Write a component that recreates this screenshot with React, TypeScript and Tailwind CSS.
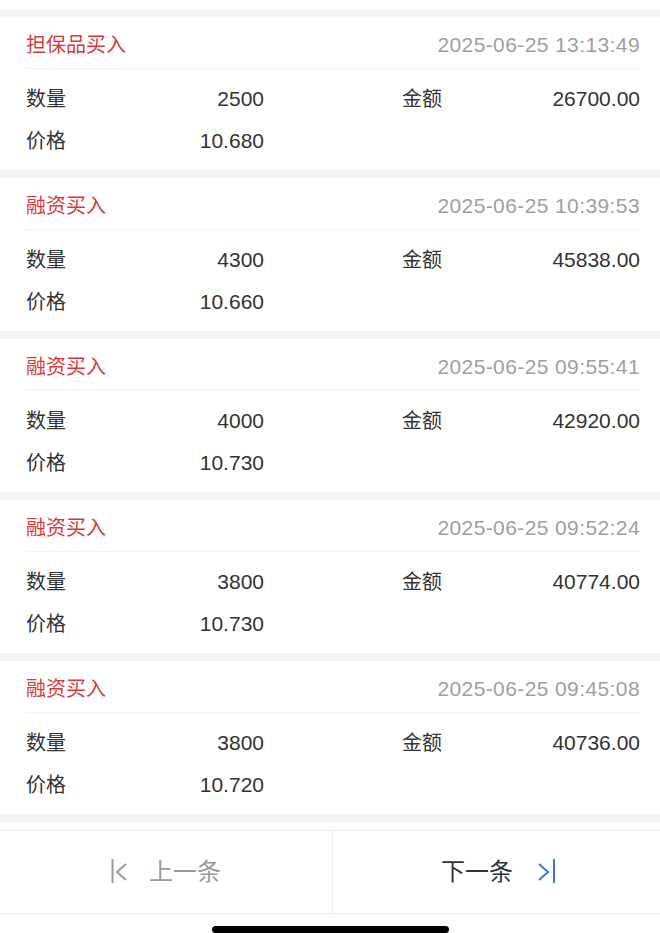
import React from "react";

type Rec = { type: string; time: string; qty: string; amount: string; price: string };

const records: Rec[] = [
  { type: "担保品买入", time: "2025-06-25 13:13:49", qty: "2500", amount: "26700.00", price: "10.680" },
  { type: "融资买入", time: "2025-06-25 10:39:53", qty: "4300", amount: "45838.00", price: "10.660" },
  { type: "融资买入", time: "2025-06-25 09:55:41", qty: "4000", amount: "42920.00", price: "10.730" },
  { type: "融资买入", time: "2025-06-25 09:52:24", qty: "3800", amount: "40774.00", price: "10.730" },
  { type: "融资买入", time: "2025-06-25 09:45:08", qty: "3800", amount: "40736.00", price: "10.720" },
];

const font = { fontFamily: '"Liberation Sans", "Noto Sans CJK SC", sans-serif' };

function Card({ r }: { r: Rec }) {
  return (
    <div className="bg-white pl-[26px] pr-[20px] h-[153px] flex flex-col">
      <div className="h-[52px] flex items-center justify-between border-b border-[#f0f0f0] pt-[4px]">
        <span className="text-[20px] text-[#d63a3a]">{r.type}</span>
        <span className="text-[21px] tracking-[0.4px] text-[#a0a0a0]">{r.time}</span>
      </div>
      <div className="grid grid-cols-2 gap-x-[138px] pt-[9px] text-[20px] text-[#333333]">
        <div className="h-[42px] flex items-center justify-between">
          <span>数量</span>
          <span className="text-[21px]">{r.qty}</span>
        </div>
        <div className="h-[42px] flex items-center justify-between">
          <span>金额</span>
          <span className="text-[21px]">{r.amount}</span>
        </div>
        <div className="h-[42px] flex items-center justify-between">
          <span>价格</span>
          <span className="text-[21px]">{r.price}</span>
        </div>
        <div className="h-[42px]" />
      </div>
    </div>
  );
}

export default function App() {
  return (
    <div className="w-[660px] h-[933px] bg-white overflow-hidden flex flex-col" style={font}>
      <div className="h-[10px] bg-white" />
      <div className="bg-[#f5f5f5] flex flex-col gap-[8px] pt-[7px] pb-[8px]">
        {records.map((r, i) => (
          <Card key={i} r={r} />
        ))}
      </div>
      <div className="h-[8px] bg-white" />
      <div className="h-[84px] flex border-t border-b border-[#ededed] bg-white">
        <div className="w-[333px] flex items-center justify-center gap-[20px] border-r border-[#ededed]">
          <svg width="18" height="26" viewBox="0 0 18 26" fill="none" stroke="#9a9a9a" strokeWidth="2">
            <line x1="1.5" y1="0" x2="1.5" y2="24" />
            <polyline points="15,5 6,13 15,21" />
          </svg>
          <span className="text-[24px] text-[#9a9a9a]">上一条</span>
        </div>
        <div className="flex-1 flex items-center justify-center gap-[24px] pl-[4px]">
          <span className="text-[24px] text-[#333333]">下一条</span>
          <svg width="19" height="26" viewBox="0 0 19 26" fill="none" stroke="#3a78d0" strokeWidth="2">
            <polyline points="2,5 11,13 2,21" />
            <line x1="17" y1="0" x2="17" y2="24" />
          </svg>
        </div>
      </div>
      <div className="flex-1 flex items-end justify-center">
        <div className="w-[237px] h-[7px] rounded-full bg-black" />
      </div>
    </div>
  );
}
